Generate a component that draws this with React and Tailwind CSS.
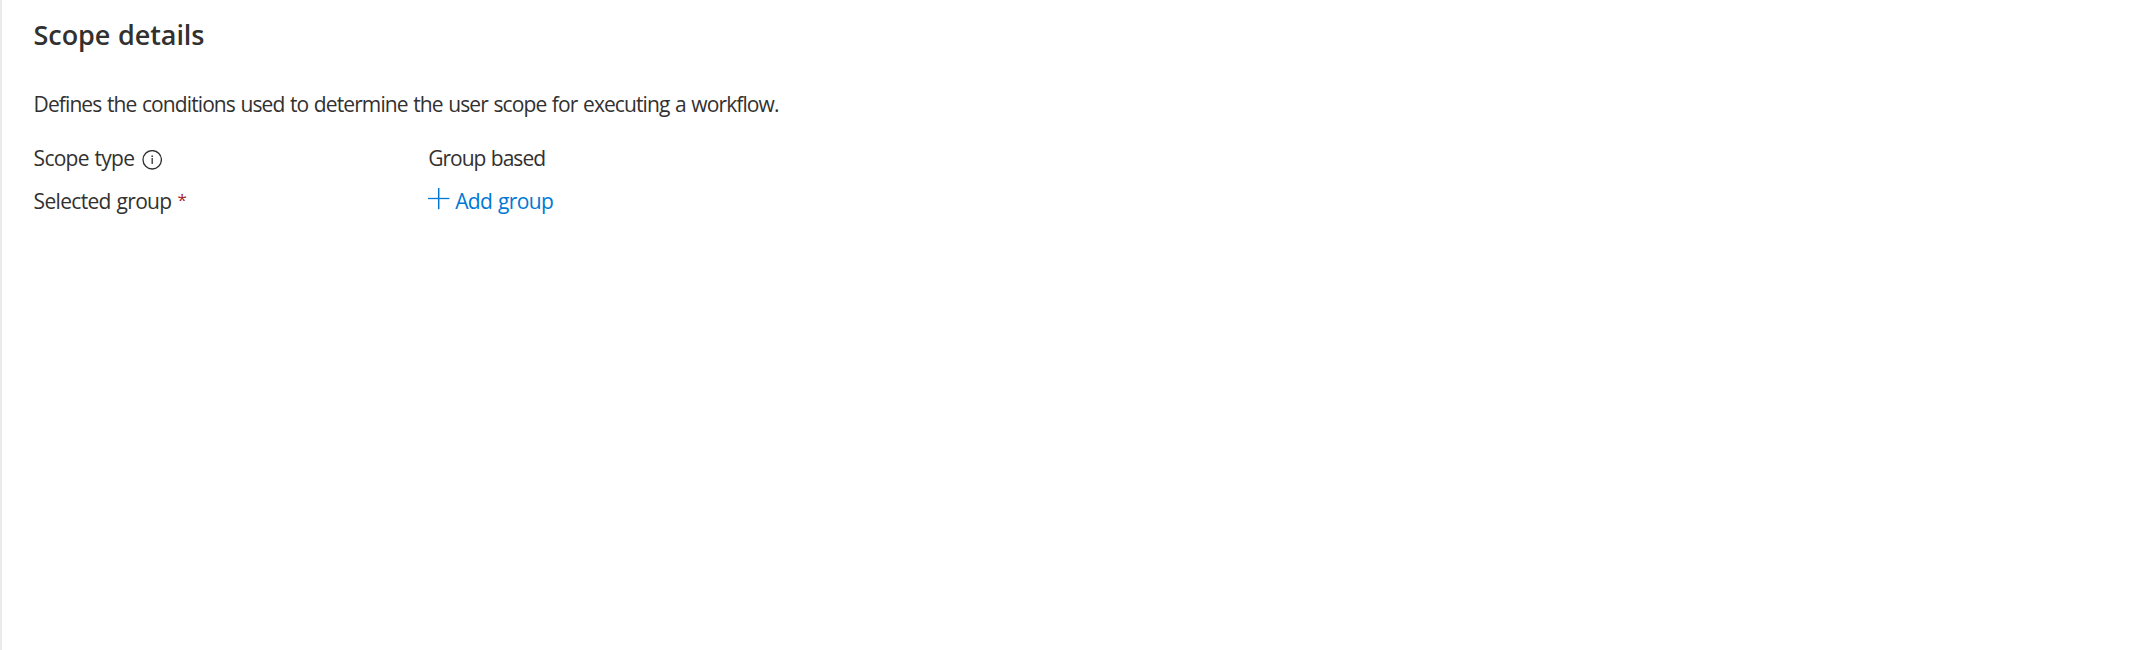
import React from "react";

function InfoIcon() {
  return (
    <svg className="ml-[8px] mt-[7px] size-5 shrink-0" viewBox="0 0 20 20" fill="none" stroke="#323130" aria-hidden="true">
      <circle cx="10.2" cy="9.8" r="9.2" strokeWidth="1.3" />
      <path d="M10.2 8v6" strokeWidth="1.3" />
      <path d="M10.2 5.5v1.4" strokeWidth="1.5" />
    </svg>
  );
}

function AddIcon() {
  return (
    <svg className="mt-[2px] size-[22px] shrink-0" viewBox="0 0 22 22" fill="none" stroke="#0078d4" aria-hidden="true">
      <path d="M0 10.5h21.4" strokeWidth="1.3" />
      <path d="M10.7 0v21.2" strokeWidth="1.5" />
    </svg>
  );
}

export default function App() {
  return (
    <main className="flex h-[650px] w-full flex-col border-l-2 border-[#eaeaea] bg-white pl-[31.6px] pt-[19px] font-['Open_Sans','Noto_Sans',sans-serif] text-[21px] leading-[30px] tracking-[-0.9px] text-[#323130] [word-spacing:1px]">
      <h2 className="h-[70px] whitespace-nowrap text-[27px] font-semibold leading-[32px] tracking-[-0.1px]">Scope details</h2>
      <p className="h-[54px] whitespace-nowrap">Defines the conditions used to determine the user scope for executing a workflow.</p>
      <dl className="grid grid-cols-[394.6px_1fr] grid-rows-[43px_30px] whitespace-nowrap">
        <dt className="flex items-start tracking-[-0.73px]">
          Scope type
          <InfoIcon />
        </dt>
        <dd className="tracking-[-1px]">Group based</dd>
        <dt className="flex items-start gap-[6px] tracking-[-0.68px]">
          Selected group
          <span className="text-[17px] leading-[28px] text-[#a4262c]">*</span>
        </dt>
        <dd>
          <a className="flex cursor-pointer items-start gap-[5px] tracking-[-0.65px] text-[#0078d4]">
            <AddIcon />
            Add group
          </a>
        </dd>
      </dl>
    </main>
  );
}
